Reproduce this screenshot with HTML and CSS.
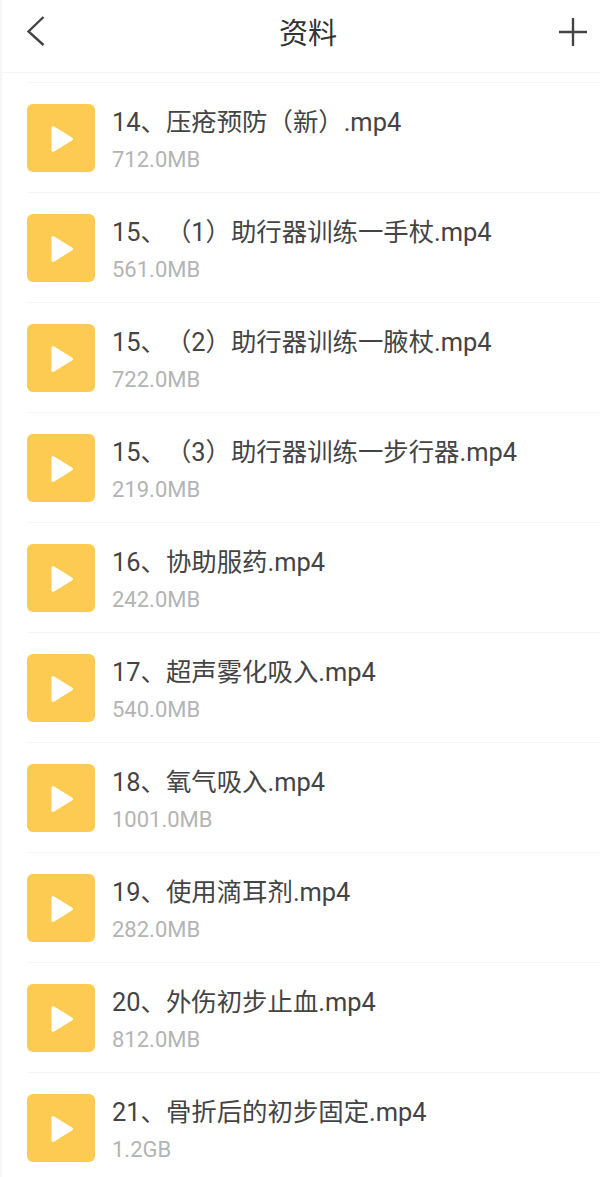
FILE: index.html
```html
<!DOCTYPE html>
<html lang="zh-CN">
<head>
<meta charset="utf-8">
<title>资料</title>
<link rel="stylesheet" href="styles.css">
</head>
<body>
<svg class="defs" width="0" height="0" aria-hidden="true"><defs>
<symbol id="play" viewBox="0 0 68 68"><rect width="68" height="68" rx="6" fill="#fecb52"/><path d="M26 23.500 L44.500 35 L26 46.500 Z" fill="#fff" stroke="#fff" stroke-width="3" stroke-linejoin="round"/></symbol>
</defs></svg>
<header class="topbar">
<svg class="icon-back" width="22" height="32" viewBox="0 0 22 32"><path d="M18.500 2 L3.500 16.500 L18.500 30" fill="none" stroke="#444" stroke-width="2.400"/></svg>
<h1 class="title">资料</h1>
<svg class="icon-add" width="30" height="30" viewBox="0 0 30 30"><path d="M1 15H29M15 1V29" fill="none" stroke="#444" stroke-width="2.400"/></svg>
</header>
<main class="list">
<div class="row"><svg class="thumb"><use href="#play"/></svg><div class="info"><div class="name">14、压疮预防（新）.mp4</div><div class="size">712.0MB</div></div></div>
<div class="row"><svg class="thumb"><use href="#play"/></svg><div class="info"><div class="name">15、（1）助行器训练一手杖.mp4</div><div class="size">561.0MB</div></div></div>
<div class="row"><svg class="thumb"><use href="#play"/></svg><div class="info"><div class="name">15、（2）助行器训练一腋杖.mp4</div><div class="size">722.0MB</div></div></div>
<div class="row"><svg class="thumb"><use href="#play"/></svg><div class="info"><div class="name">15、（3）助行器训练一步行器.mp4</div><div class="size">219.0MB</div></div></div>
<div class="row"><svg class="thumb"><use href="#play"/></svg><div class="info"><div class="name">16、协助服药.mp4</div><div class="size">242.0MB</div></div></div>
<div class="row"><svg class="thumb"><use href="#play"/></svg><div class="info"><div class="name">17、超声雾化吸入.mp4</div><div class="size">540.0MB</div></div></div>
<div class="row"><svg class="thumb"><use href="#play"/></svg><div class="info"><div class="name">18、氧气吸入.mp4</div><div class="size">1001.0MB</div></div></div>
<div class="row"><svg class="thumb"><use href="#play"/></svg><div class="info"><div class="name">19、使用滴耳剂.mp4</div><div class="size">282.0MB</div></div></div>
<div class="row"><svg class="thumb"><use href="#play"/></svg><div class="info"><div class="name">20、外伤初步止血.mp4</div><div class="size">812.0MB</div></div></div>
<div class="row"><svg class="thumb"><use href="#play"/></svg><div class="info"><div class="name">21、骨折后的初步固定.mp4</div><div class="size">1.2GB</div></div></div>
</main>
</body>
</html>
```
FILE: styles.css
```css
* { box-sizing: border-box; }
html, body { margin: 0; height: 100%; overflow: hidden; background: #fff; }
body {
  font-family: "Roboto", "Noto Sans CJK SC", sans-serif;
  border-left: 2px solid #f6f6f6;
  text-spacing-trim: space-all;
  font-feature-settings: "palt" 0, "chws" 0;
}
.defs { position: absolute; }
.topbar {
  height: 73px;
  display: flex;
  align-items: center;
  justify-content: space-between;
  padding: 0 12px 10px 23px;
  border-bottom: 1px solid #f5f5f5;
}
.title {
  margin: 6px 0 0 11px;
  font-size: 29px;
  font-weight: 400;
  color: #333;
  line-height: 40px;
}
.icon-add { margin-top: 2px; }
.list { padding: 9px 0 0 25px; }
.row {
  height: 110px;
  display: flex;
  align-items: center;
  gap: 17px;
  padding-top: 1px;
  border-top: 1px solid #f6f6f6;
}
.thumb { width: 68px; height: 68px; flex: none; }
.info { display: flex; flex-direction: column; padding-top: 2px; }
.name { font-size: 25.4px; line-height: 36px; color: #444; white-space: nowrap; }
.size { font-size: 22px; line-height: 28px; color: #b4b4b4; margin-top: 6px; }
```
